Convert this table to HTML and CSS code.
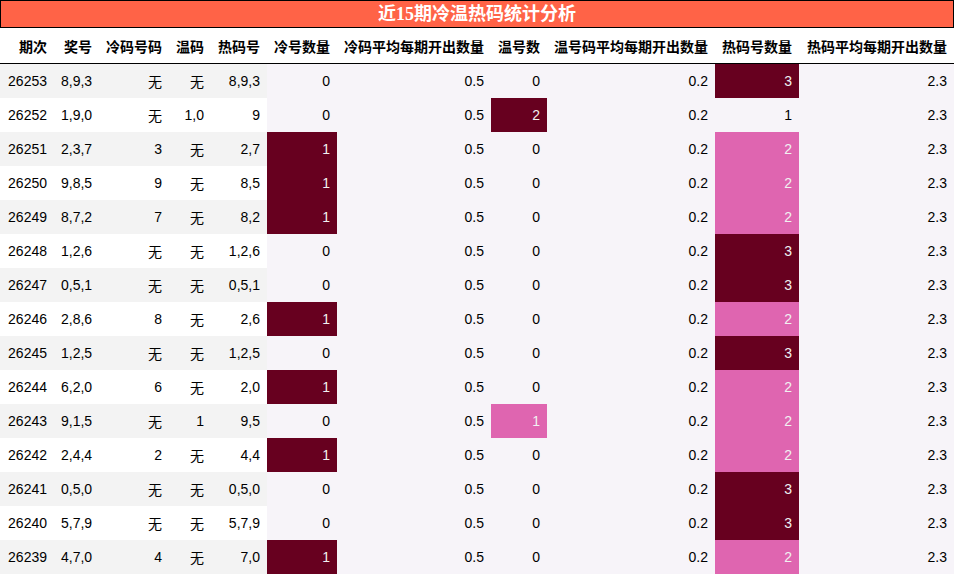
FILE: index.html
```html
<!DOCTYPE html>
<html lang="zh">
<head>
<meta charset="utf-8">
<title>近15期冷温热码统计分析</title>
<link rel="stylesheet" href="styles.css">
</head>
<body>
<div class="title">近15期冷温热码统计分析</div>
<table class="stats">
  <colgroup>
    <col class="w-qc"><col class="w-jh"><col class="w-lm"><col class="w-wm"><col class="w-rm">
    <col class="w-ls"><col class="w-lavg"><col class="w-ws"><col class="w-wavg"><col class="w-rs"><col class="w-ravg">
  </colgroup>
  <thead>
    <tr>
      <th>期次</th><th>奖号</th><th>冷码号码</th><th>温码</th><th>热码号</th><th>冷号数量</th><th>冷码平均每期开出数量</th><th>温号数</th><th>温号码平均每期开出数量</th><th>热码号数量</th><th>热码平均每期开出数量</th>
    </tr>
  </thead>
  <tbody>
    <tr><td>26253</td><td class="l">8,9,3</td><td>无</td><td>无</td><td>8,9,3</td><td class="g0">0</td><td class="g0">0.5</td><td class="g0">0</td><td class="g0">0.2</td><td class="g2">3</td><td class="g0">2.3</td></tr>
    <tr><td>26252</td><td class="l">1,9,0</td><td>无</td><td>1,0</td><td>9</td><td class="g0">0</td><td class="g0">0.5</td><td class="g2">2</td><td class="g0">0.2</td><td class="g0">1</td><td class="g0">2.3</td></tr>
    <tr><td>26251</td><td class="l">2,3,7</td><td>3</td><td>无</td><td>2,7</td><td class="g2">1</td><td class="g0">0.5</td><td class="g0">0</td><td class="g0">0.2</td><td class="g1">2</td><td class="g0">2.3</td></tr>
    <tr><td>26250</td><td class="l">9,8,5</td><td>9</td><td>无</td><td>8,5</td><td class="g2">1</td><td class="g0">0.5</td><td class="g0">0</td><td class="g0">0.2</td><td class="g1">2</td><td class="g0">2.3</td></tr>
    <tr><td>26249</td><td class="l">8,7,2</td><td>7</td><td>无</td><td>8,2</td><td class="g2">1</td><td class="g0">0.5</td><td class="g0">0</td><td class="g0">0.2</td><td class="g1">2</td><td class="g0">2.3</td></tr>
    <tr><td>26248</td><td class="l">1,2,6</td><td>无</td><td>无</td><td>1,2,6</td><td class="g0">0</td><td class="g0">0.5</td><td class="g0">0</td><td class="g0">0.2</td><td class="g2">3</td><td class="g0">2.3</td></tr>
    <tr><td>26247</td><td class="l">0,5,1</td><td>无</td><td>无</td><td>0,5,1</td><td class="g0">0</td><td class="g0">0.5</td><td class="g0">0</td><td class="g0">0.2</td><td class="g2">3</td><td class="g0">2.3</td></tr>
    <tr><td>26246</td><td class="l">2,8,6</td><td>8</td><td>无</td><td>2,6</td><td class="g2">1</td><td class="g0">0.5</td><td class="g0">0</td><td class="g0">0.2</td><td class="g1">2</td><td class="g0">2.3</td></tr>
    <tr><td>26245</td><td class="l">1,2,5</td><td>无</td><td>无</td><td>1,2,5</td><td class="g0">0</td><td class="g0">0.5</td><td class="g0">0</td><td class="g0">0.2</td><td class="g2">3</td><td class="g0">2.3</td></tr>
    <tr><td>26244</td><td class="l">6,2,0</td><td>6</td><td>无</td><td>2,0</td><td class="g2">1</td><td class="g0">0.5</td><td class="g0">0</td><td class="g0">0.2</td><td class="g1">2</td><td class="g0">2.3</td></tr>
    <tr><td>26243</td><td class="l">9,1,5</td><td>无</td><td>1</td><td>9,5</td><td class="g0">0</td><td class="g0">0.5</td><td class="g1">1</td><td class="g0">0.2</td><td class="g1">2</td><td class="g0">2.3</td></tr>
    <tr><td>26242</td><td class="l">2,4,4</td><td>2</td><td>无</td><td>4,4</td><td class="g2">1</td><td class="g0">0.5</td><td class="g0">0</td><td class="g0">0.2</td><td class="g1">2</td><td class="g0">2.3</td></tr>
    <tr><td>26241</td><td class="l">0,5,0</td><td>无</td><td>无</td><td>0,5,0</td><td class="g0">0</td><td class="g0">0.5</td><td class="g0">0</td><td class="g0">0.2</td><td class="g2">3</td><td class="g0">2.3</td></tr>
    <tr><td>26240</td><td class="l">5,7,9</td><td>无</td><td>无</td><td>5,7,9</td><td class="g0">0</td><td class="g0">0.5</td><td class="g0">0</td><td class="g0">0.2</td><td class="g2">3</td><td class="g0">2.3</td></tr>
    <tr><td>26239</td><td class="l">4,7,0</td><td>4</td><td>无</td><td>7,0</td><td class="g2">1</td><td class="g0">0.5</td><td class="g0">0</td><td class="g0">0.2</td><td class="g1">2</td><td class="g0">2.3</td></tr>
  </tbody>
</table>
</body>
</html>
```
FILE: styles.css
```css
html, body {
  margin: 0;
  padding: 0;
  background: #ffffff;
}

body {
  font-family: "Liberation Sans", "Noto Sans CJK SC", sans-serif;
  font-size: 14px;
  color: #000;
}

.title {
  height: 26px;
  line-height: 26px;
  border: 1px solid #000;
  background: #ff6347;
  color: #ffffff;
  text-align: center;
  font-family: "Liberation Serif", "Noto Sans CJK SC", serif;
  font-weight: bold;
  font-size: 18px;
}

.stats {
  width: 954px;
  table-layout: fixed;
  border-collapse: collapse;
  border-spacing: 0;
}

.w-qc { width: 54px; }
.w-jh { width: 45px; }
.w-lm { width: 70px; }
.w-wm { width: 42px; }
.w-rm { width: 56px; }
.w-ls { width: 70px; }
.w-lavg { width: 154px; }
.w-ws { width: 56px; }
.w-wavg { width: 168px; }
.w-rs { width: 84px; }
.w-ravg { width: 155px; }

.stats th {
  height: 35px;
  padding: 0 7px 0 0;
  text-align: right;
  font-weight: bold;
  white-space: nowrap;
  border-bottom: 1px solid #000;
  background: #ffffff;
}

.stats td {
  height: 34px;
  padding: 0 7px 0 0;
  text-align: right;
  white-space: nowrap;
}

.stats td.l {
  text-align: left;
  padding-left: 7px;
}

.stats tbody tr:nth-child(odd) td {
  background: #f3f3f3;
}

.stats tbody tr:nth-child(even) td {
  background: #ffffff;
}

.stats tbody tr td.g0 {
  background: #f7f4f9;
  color: #000000;
}

.stats tbody tr td.g1 {
  background: #df65b0;
  color: #f1f1f1;
}

.stats tbody tr td.g2 {
  background: #67001f;
  color: #f1f1f1;
}
```
